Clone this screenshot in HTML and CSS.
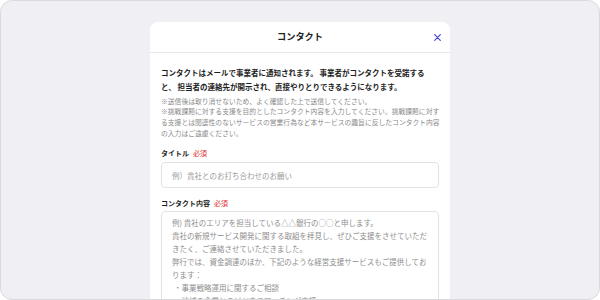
FILE: index.html
```html
<!DOCTYPE html>
<html lang="ja">
<head>
<meta charset="utf-8">
<link rel="stylesheet" href="styles.css">
</head>
<body>
<div class="frame">
  <div class="modal">
    <div class="header">
      <span></span>
      <h1 class="title">コンタクト</h1>
      <button class="close" aria-label="閉じる">
        <svg width="7" height="7" viewBox="0 0 7 7"><path d="M0.7 0.7 L6.3 6.3 M6.3 0.7 L0.7 6.3" stroke="#4646d2" stroke-width="1.2" stroke-linecap="round" fill="none"/></svg>
      </button>
    </div>
    <div class="body">
      <p class="lead">コンタクトはメールで事業者に通知されます。 事業者がコンタクトを受諾する<br>と、 担当者の連絡先が開示され、直接やりとりできるようになります。</p>
      <p class="note">※送信後は取り消せないため、よく確認した上で送信してください。<br>※挑戦課題に対する支援を目的としたコンタクト内容を入力してください。挑戦課題に対す<br>る支援とは関連性のないサービスの営業行為など本サービスの趣旨に反したコンタクト内容<br>の入力はご遠慮ください。</p>
      <label class="label">タイトル<span class="req">必須</span></label>
      <div class="input">例）貴社とのお打ち合わせのお願い</div>
      <label class="label label2">コンタクト内容<span class="req">必須</span></label>
      <div class="textarea">
        <div>例) 貴社のエリアを担当している△△銀行の○○と申します。</div>
        <div>貴社の新規サービス開発に関する取組を拝見し、ぜひご支援をさせていただ</div>
        <div>きたく、ご連絡させていただきました。</div>
        <div>弊行では、資金調達のほか、下記のような経営支援サービスもご提供してお</div>
        <div>ります：</div>
        <div class="bullet">・事業戦略運用に関するご相談</div>
        <div class="bullet">・地域の企業とのビジネスマッチング支援</div>
      </div>
    </div>
  </div>
</div>
</body>
</html>
```
FILE: styles.css
```css
* { box-sizing: border-box; }
html, body { margin: 0; padding: 0; background: #ffffff; }
body { font-family: "Noto Sans CJK JP", "Noto Sans", sans-serif; }
.frame {
  width: 600px;
  height: 300px;
  border: 1px solid #d9d9de;
  border-radius: 12px;
  background: #efeff4;
  overflow: hidden;
  display: flex;
  justify-content: center;
  align-items: flex-start;
  padding-top: 21px;
}
.modal {
  width: 300px;
  flex-shrink: 0;
  background: #ffffff;
  border-radius: 8px 8px 0 0;
}
.header {
  height: 31px;
  display: grid;
  grid-template-columns: 1fr auto 1fr;
  align-items: center;
  border-bottom: 1px solid #e8e8ea;
}
.title {
  margin: 0;
  font-size: 9.2px;
  font-weight: 700;
  color: #222;
  line-height: 1;
}
.close {
  justify-self: end;
  margin-right: 9px;
  border: 0;
  background: none;
  padding: 0;
  width: 7px;
  height: 7px;
  display: flex;
}
.body {
  padding: 13px 11px 20px 11px;
  display: flex;
  flex-direction: column;
}
.lead {
  margin: 0;
  font-size: 7.5px;
  line-height: 14px;
  font-weight: 700;
  color: #1e1e1e;
  white-space: nowrap;
}
.note {
  margin: 1.5px 0 0;
  font-size: 6.8px;
  line-height: 10.7px;
  color: #8a8a8a;
  white-space: nowrap;
}
.label {
  margin-top: 10px;
  font-size: 7px;
  line-height: 10px;
  font-weight: 700;
  color: #1e1e1e;
  display: flex;
  gap: 4px;
}
.req { color: #e0302a; font-weight: 400; }
.input {
  margin-top: 4px;
  height: 26px;
  flex-shrink: 0;
  border: 1px solid #e2e2e5;
  border-radius: 4px;
  padding: 0 10px;
  display: flex;
  align-items: center;
  font-size: 7.5px;
  color: #9a9a9a;
}
.label2 { margin-top: 10px; }
.textarea {
  margin-top: 3px;
  height: 120px;
  flex-shrink: 0;
  border: 1px solid #e2e2e5;
  border-radius: 4px;
  padding: 4px 10px;
  font-size: 7.5px;
  line-height: 13px;
  color: #8e8e8e;
  white-space: nowrap;
}
.bullet { padding-left: 2px; }
```
